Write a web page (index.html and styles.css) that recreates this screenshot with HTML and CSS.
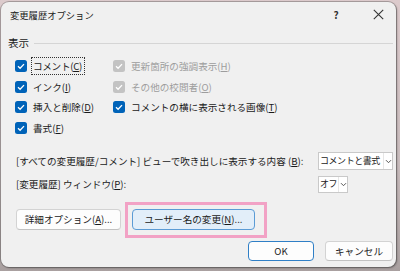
FILE: index.html
```html
<!DOCTYPE html>
<html lang="ja">
<head>
<meta charset="utf-8">
<link rel="stylesheet" href="styles.css">
</head>
<body>
<div class="dialog">
  <div class="titlebar">
    <span class="title">変更履歴オプション</span>
    <span class="tb-help">?</span>
    <span class="tb-close"><svg width="11" height="11" viewBox="0 0 11 11"><path d="M0.8 0.8 L10.2 10.2 M10.2 0.8 L0.8 10.2" stroke="#333" stroke-width="1.1" fill="none"/></svg></span>
  </div>
  <div class="content">
    <div class="group-head"><span class="group-title">表示</span><span class="rule"></span></div>
    <div class="checks">
      <div class="chk"><span class="box"><svg width="12" height="12" viewBox="0 0 12 12"><path d="M3 6.3 L5.1 8.3 L9 4.1" stroke="#fff" stroke-width="1.3" fill="none"/></svg></span><span class="lbl focus">コメント(<u>C</u>)</span></div>
      <div class="chk disabled"><span class="box"><svg width="12" height="12" viewBox="0 0 12 12"><path d="M3 6.3 L5.1 8.3 L9 4.1" stroke="#fff" stroke-width="1.3" fill="none"/></svg></span><span class="lbl">更新箇所の強調表示(<u>H</u>)</span></div>
      <div class="chk"><span class="box"><svg width="12" height="12" viewBox="0 0 12 12"><path d="M3 6.3 L5.1 8.3 L9 4.1" stroke="#fff" stroke-width="1.3" fill="none"/></svg></span><span class="lbl">インク(<u>I</u>)</span></div>
      <div class="chk disabled"><span class="box"><svg width="12" height="12" viewBox="0 0 12 12"><path d="M3 6.3 L5.1 8.3 L9 4.1" stroke="#fff" stroke-width="1.3" fill="none"/></svg></span><span class="lbl">その他の校閲者(<u>O</u>)</span></div>
      <div class="chk"><span class="box"><svg width="12" height="12" viewBox="0 0 12 12"><path d="M3 6.3 L5.1 8.3 L9 4.1" stroke="#fff" stroke-width="1.3" fill="none"/></svg></span><span class="lbl">挿入と削除(<u>D</u>)</span></div>
      <div class="chk"><span class="box"><svg width="12" height="12" viewBox="0 0 12 12"><path d="M3 6.3 L5.1 8.3 L9 4.1" stroke="#fff" stroke-width="1.3" fill="none"/></svg></span><span class="lbl">コメントの横に表示される画像(<u>T</u>)</span></div>
      <div class="chk"><span class="box"><svg width="12" height="12" viewBox="0 0 12 12"><path d="M3 6.3 L5.1 8.3 L9 4.1" stroke="#fff" stroke-width="1.3" fill="none"/></svg></span><span class="lbl">書式(<u>F</u>)</span></div>
    </div>
    <div class="fields">
      <span class="field-label">[すべての変更履歴/コメント] ビューで吹き出しに表示する内容 (<u>B</u>):</span>
      <div class="combo wide"><span class="combo-val">コメントと書式</span><span class="combo-arrow"><svg width="7" height="5" viewBox="0 0 7 5"><path d="M1 1.2 L3.5 3.7 L6 1.2" stroke="#555" stroke-width="1" fill="none"/></svg></span></div>
      <span class="field-label">[変更履歴] ウィンドウ(<u>P</u>):</span>
      <div class="combo narrow"><span class="combo-val">オフ</span><span class="combo-arrow"><svg width="7" height="5" viewBox="0 0 7 5"><path d="M1 1.2 L3.5 3.7 L6 1.2" stroke="#555" stroke-width="1" fill="none"/></svg></span></div>
    </div>
    <div class="btn-row">
      <button class="btn adv">詳細オプション(<u>A</u>)...</button>
      <span class="highlight"><button class="btn user">ユーザー名の変更(<u>N</u>)...</button></span>
    </div>
    <div class="foot">
      <button class="btn ok">OK</button>
      <button class="btn cancel">キャンセル</button>
    </div>
  </div>
</div>
</body>
</html>
```
FILE: styles.css
```css
* { box-sizing: border-box; }
html, body { margin: 0; }
body {
  width: 400px;
  height: 271px;
  overflow: hidden;
  padding: 2px 4px 4px 1px;
  background: linear-gradient(180deg, #dccacc 0%, #c9bcbd 60%, #a9a0a0 100%);
  font-family: "Noto Sans CJK JP", "Noto Sans", sans-serif;
  font-size: 9.6px;
  color: #1a1a1a;
}
.dialog {
  width: 395px;
  height: 265px;
  background: #f0f0f0;
  border-radius: 8px;
  box-shadow: 0 0 0 1px rgba(70, 70, 70, 0.35), 1px 1px 2px rgba(0, 0, 0, 0.35);
  display: flex;
  flex-direction: column;
}
.titlebar {
  height: 25px;
  display: flex;
  align-items: center;
  padding-left: 9px;
}
.title { flex: 1; font-size: 9.3px; }
.tb-help {
  width: 14px;
  margin-right: 17px;
  text-align: center;
  font-size: 10px;
  font-weight: bold;
  color: #333;
}
.tb-close {
  width: 36px;
  display: flex;
  justify-content: center;
  align-items: center;
  padding-bottom: 1px;
}
.content {
  padding: 9px 3px 0 7px;
}
.group-head {
  height: 14px;
  display: flex;
  align-items: center;
  gap: 5px;
}
.group-title { font-size: 10.5px; line-height: 14px; }
.rule {
  flex: 1;
  height: 1px;
  background: #d5d5d5;
}
.checks {
  display: grid;
  grid-template-columns: 98px 1fr;
  grid-auto-rows: 20.6px;
  margin: 5.75px 0 0 7px;
}
.chk {
  display: flex;
  align-items: center;
  gap: 6px;
}
.box {
  width: 12px;
  height: 12px;
  border-radius: 2.5px;
  background: #0063b8;
  display: flex;
}
.chk.disabled .box { background: #c3c3c3; }
.chk.disabled .lbl { color: #9d9d9d; }
.lbl { line-height: 14px; white-space: nowrap; }
.focus {
  border: 1px dotted #333;
  padding: 1px 2px 1px 1px;
  margin-left: -2px;
  letter-spacing: -0.3px;
}
.fields {
  margin-top: 14.3px;
  padding-left: 8px;
  display: grid;
  grid-template-columns: 1fr 75px;
  grid-auto-rows: 18px;
  row-gap: 5px;
  align-items: center;
}
.field-label { white-space: nowrap; }
.combo {
  height: 18px;
  background: #fff;
  border: 1px solid #c9c9c9;
  display: flex;
  align-items: center;
  overflow: hidden;
}
.combo.narrow { width: 30px; height: 17px; }
.combo-val {
  flex: 1;
  white-space: nowrap;
  padding-left: 1px;
  font-size: 9px;
  letter-spacing: -0.45px;
  line-height: 14px;
}
.combo-arrow {
  width: 9px;
  align-self: stretch;
  border-left: 1px solid #e6e6e6;
  display: flex;
  justify-content: center;
  align-items: center;
  flex: none;
}
.btn-row {
  margin-top: 15.5px;
  padding-left: 8px;
  height: 21px;
  display: flex;
  gap: 11px;
}
.btn {
  font-family: inherit;
  font-size: 9.6px;
  color: #1a1a1a;
  background: #fdfdfd;
  border: 1px solid #d3d3d3;
  border-bottom-color: #c2c2c2;
  border-radius: 4px;
  padding: 0;
  margin: 0;
  height: 21px;
  white-space: nowrap;
}
.btn.adv { width: 105px; }
.btn.user {
  width: 123px;
  background: #e2eef9;
  border-color: #5b9bd5;
}
.highlight { position: relative; display: flex; }
.highlight::after {
  content: "";
  position: absolute;
  left: -7.5px;
  right: -11.5px;
  top: -7px;
  bottom: -8px;
  border: 3px solid #f2a2c5;
  pointer-events: none;
}
.foot {
  margin-top: 10.7px;
  display: flex;
  justify-content: flex-end;
  gap: 11px;
}
.btn.ok {
  width: 66px;
  height: 20px;
  border-color: #2f7fc6;
  background: #fdfdfd;
}
.btn.cancel { width: 68px; height: 20px; }
```
